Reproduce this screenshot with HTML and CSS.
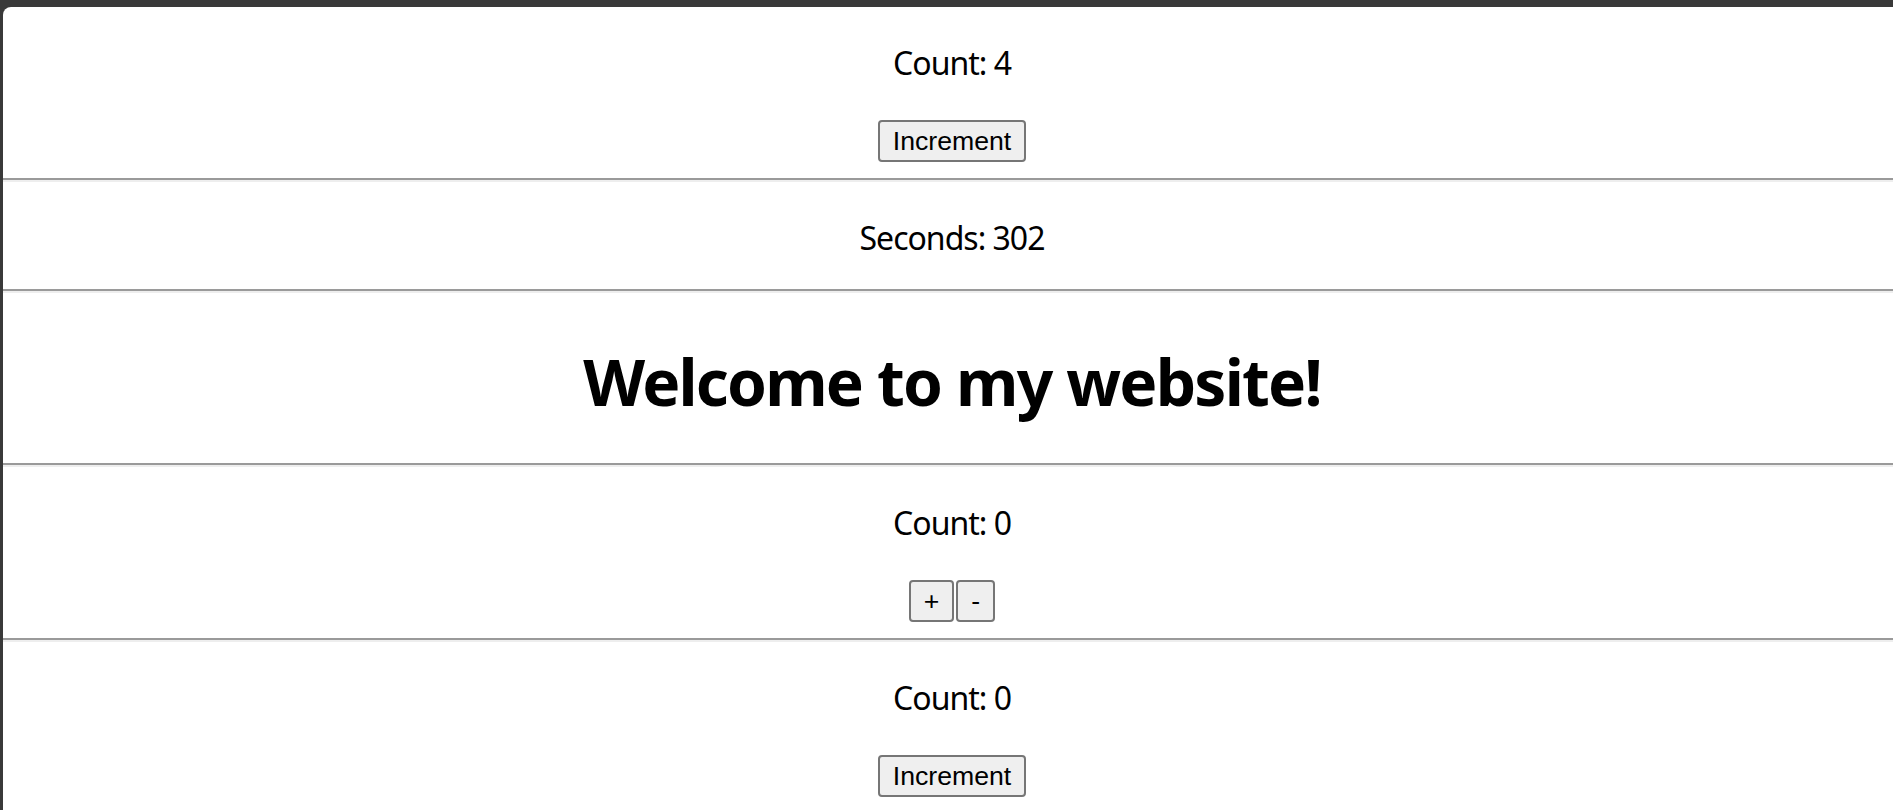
FILE: index.html
```html
<!DOCTYPE html>
<html lang="en">
<head>
<meta charset="utf-8">
<title>My website</title>
<link rel="stylesheet" href="styles.css">
</head>
<body>
<div class="window">
  <section class="block">
    <p class="label">Count: 4</p>
    <div class="controls"><button class="btn">Increment</button></div>
  </section>
  <hr class="divider">
  <section class="block">
    <p class="label">Seconds: 302</p>
  </section>
  <hr class="divider">
  <section class="block">
    <h1 class="title">Welcome to my website!</h1>
  </section>
  <hr class="divider">
  <section class="block">
    <p class="label">Count: 0</p>
    <div class="controls"><button class="btn">+</button><button class="btn">-</button></div>
  </section>
  <hr class="divider">
  <section class="block">
    <p class="label">Count: 0</p>
    <div class="controls"><button class="btn">Increment</button></div>
  </section>
</div>
</body>
</html>
```
FILE: styles.css
```css
html, body {
  margin: 0;
  height: 100%;
}

body {
  background: #393939;
  padding: 7px 0 0 3px;
  box-sizing: border-box;
  overflow: hidden;
  font-family: "Noto Sans", "Open Sans", sans-serif;
  color: #000;
}

.window {
  display: flow-root;
  width: 1898px;
  min-height: 100%;
  background: #fff;
  border-top-left-radius: 8px;
}

.block {
  text-align: center;
}

.label {
  margin: 32px 0 30px;
  padding-top: 2px;
  font-size: 32px;
  line-height: 43px;
  letter-spacing: -1px;
}

.title {
  margin: 46px 0 38px;
  font-size: 64px;
  line-height: 86px;
  font-weight: 700;
  letter-spacing: -1.8px;
}

.controls {
  display: flex;
  justify-content: center;
  align-items: flex-start;
  gap: 2px;
  padding-top: 6px;
}

.btn {
  font-family: "Liberation Sans", Arial, sans-serif;
  font-size: 26.67px;
  line-height: 30px;
  padding: 4px 13px;
  margin: 0;
  border: 2px solid #767676;
  border-radius: 4px;
  background: #efefef;
  color: #000;
}

.divider {
  margin: 16px 0;
  height: 0;
  border: 0;
  border-top: 2px solid #9a9a9a;
  border-bottom: 2px solid #eeeeee;
}
```
